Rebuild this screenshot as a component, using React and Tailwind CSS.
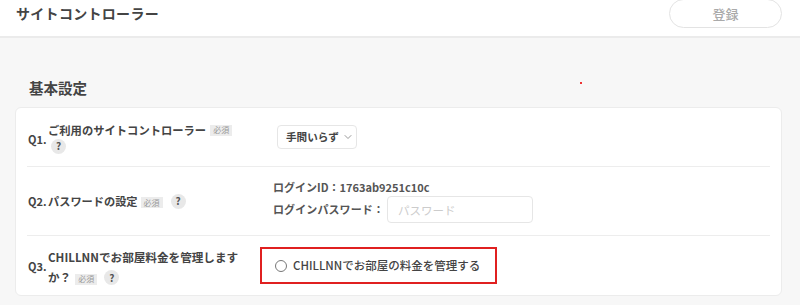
import { ChevronDown } from "lucide-react";

const font = "font-['Noto_Sans_CJK_JP','Noto_Sans',sans-serif]";

function Required() {
  return (
    <span className="inline-flex items-center h-[11px] px-[3px] bg-[#ececec] text-[8px] leading-none text-[#999] font-normal">
      必須
    </span>
  );
}

function Help() {
  return (
    <span className="inline-flex items-center justify-center w-[15px] h-[15px] rounded-full bg-[#e8e8e8] text-[10px] leading-none font-bold text-[#555]">
      ?
    </span>
  );
}

function QNum({ children, className = "" }) {
  return (
    <span className={`w-[21px] shrink-0 pl-px text-[11px] font-bold text-[#444] ${className}`}>
      {children}
    </span>
  );
}

export default function App() {
  return (
    <div className={`w-[800px] h-[305px] overflow-hidden bg-[#f7f7f7] text-[#444] ${font}`}>
      <header className="h-[38px] bg-white border-b-2 border-[#ebebeb] flex items-start justify-between pl-4 pr-[18px]">
        <h1 className="mt-[3px] text-[14px] leading-5 font-bold tracking-[0.3px] text-[#444]">サイトコントローラー</h1>
        <button className="-mt-px w-[113px] h-[29px] rounded-full border border-[#e3e3e3] bg-white text-[13px] font-medium text-[#aaa]">
          登録
        </button>
      </header>

      <main className="relative pt-10 pl-[15px] pr-[18px]">
        <span className="absolute left-[580px] top-[44px] w-[2px] h-[2px] bg-[#e33]" />
        <h2 className="pl-[14px] text-[14.5px] leading-5 font-bold text-[#444]">基本設定</h2>

        <section className="mt-[9px] bg-white border border-[#ececec] rounded-[6px] px-[11px]">
          {/* Q1 */}
          <div className="h-[59px] flex items-center border-b border-[#ededed]">
            <div className="w-[233px] flex items-center">
              <QNum className="mt-[5px]">Q1.</QNum>
              <div className="flex flex-col mt-[2px]">
                <div className="flex items-center gap-[4px] text-[11.3px] leading-[15px] font-bold">
                  <span>ご利用のサイトコントローラー</span>
                  <Required />
                </div>
                <div className="flex pl-[3px] mt-px">
                  <Help />
                </div>
              </div>
            </div>
            <div className="ml-[17px] h-[24px] w-[80px] flex items-center whitespace-nowrap pl-[8px] border border-[#e6e6e6] rounded-[4px] text-[10.6px] font-bold text-[#444]">
              <span>手間いらず</span>
              <ChevronDown className="ml-[3px] w-[12px] h-[12px] text-[#777] shrink-0" strokeWidth={1.5} />
            </div>
          </div>

          {/* Q2 */}
          <div className="h-[69px] flex items-center border-b border-[#ededed]">
            <div className="w-[233px] flex items-center">
              <QNum>Q2.</QNum>
              <div className="flex items-center text-[11.2px] leading-[14px] font-bold">
                <span>パスワードの設定</span>
                <span className="ml-[3px]"><Required /></span>
                <span className="ml-[8px]"><Help /></span>
              </div>
            </div>
            <div className="ml-[13px] flex flex-col text-[11px] text-[#555] font-semibold">
              <div className="leading-[16px] mb-[1px]">ログインID：1763ab9251c10c</div>
              <div className="flex items-center">
                <span className="tracking-[0.1px]">ログインパスワード：</span>
                <input
                  className="ml-[3px] w-[146px] h-[27px] border border-[#e6e6e6] rounded-[4px] px-[10px] text-[11.5px] font-normal placeholder:text-[#ccc] outline-none"
                  placeholder="パスワード"
                />
              </div>
            </div>
          </div>

          {/* Q3 */}
          <div className="h-[59px] flex items-center">
            <div className="w-[233px] flex items-center">
              <QNum className="mt-[1px]">Q3.</QNum>
              <div className="flex flex-col gap-[5px] mt-[4px] text-[11.6px] leading-[15px] font-bold">
                <span>CHILLNNでお部屋料金を管理します</span>
                <div className="flex items-center">
                  <span>か？</span>
                  <span className="ml-[4px]"><Required /></span>
                  <span className="ml-[7px]"><Help /></span>
                </div>
              </div>
            </div>
            <label className="w-[237px] h-[37px] flex items-center gap-[6px] pl-[13px] border-2 border-[#e02020] text-[11.5px] font-medium text-[#444] whitespace-nowrap">
              <span className="w-[12px] h-[12px] shrink-0 rounded-full border-[1.5px] border-[#777] bg-white" />
              <span>CHILLNNでお部屋の料金を管理する</span>
            </label>
          </div>
        </section>
      </main>
    </div>
  );
}
